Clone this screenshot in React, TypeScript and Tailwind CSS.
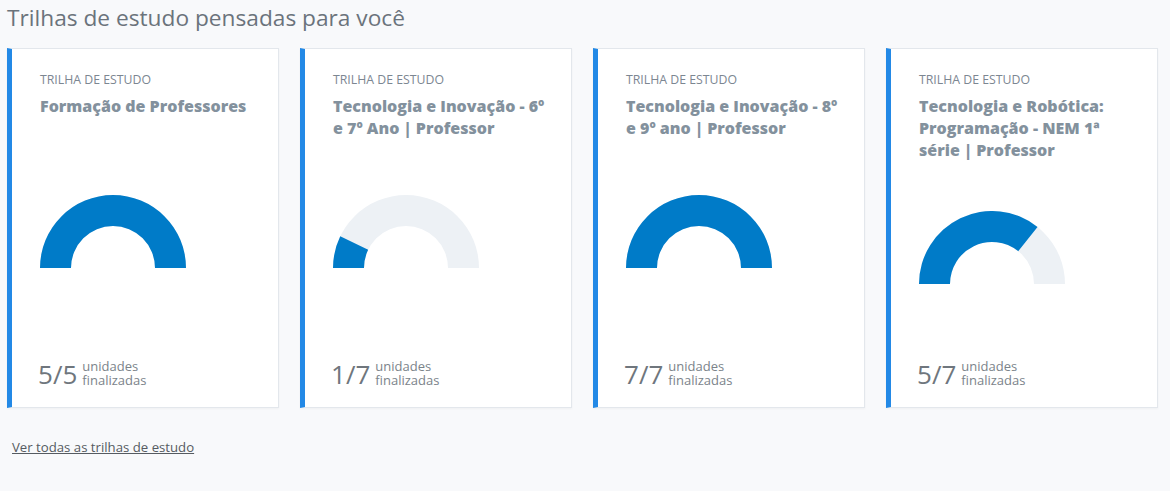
import React from 'react';

interface TrailCardProps {
  title: string;
  done: number;
  total: number;
}

const Gauge: React.FC<{ value: number }> = ({ value }) => {
  const R = 73;
  const r = 42;
  const cx = 73;
  const cy = 73;
  const a = Math.PI * value;
  const ox = cx - R * Math.cos(a);
  const oy = cy - R * Math.sin(a);
  const ix = cx - r * Math.cos(a);
  const iy = cy - r * Math.sin(a);
  const track = `M ${cx - R} ${cy} A ${R} ${R} 0 0 1 ${cx + R} ${cy} L ${cx + r} ${cy} A ${r} ${r} 0 0 0 ${cx - r} ${cy} Z`;
  const fill = `M ${cx - R} ${cy} A ${R} ${R} 0 0 1 ${ox} ${oy} L ${ix} ${iy} A ${r} ${r} 0 0 0 ${cx - r} ${cy} Z`;
  return (
    <svg width="146" height="73" viewBox="0 0 146 73" className="block">
      <path d={track} fill="#edf1f5" />
      {value > 0 && <path d={fill} fill="#007bc8" />}
    </svg>
  );
};

const TrailCard: React.FC<TrailCardProps> = ({ title, done, total }) => {
  return (
    <div className="h-[360px] flex flex-col bg-white border border-[#e3e7ec] border-l-[5px] border-l-[#2389e6] pl-[28px] pr-5 pt-[23px] pb-[18px] shadow-[0_1px_2px_rgba(0,0,0,0.04)]">
      <div className="text-[12.3px] leading-[16px] text-[#7c8691] uppercase mb-[7px]">Trilha de estudo</div>
      <div className="min-h-[50px] text-[16px] leading-[22px] font-extrabold text-[#83919d]">{title}</div>
      <div className="mt-[50px]">
        <Gauge value={done / total} />
      </div>
      <div className="mt-auto flex items-center gap-[5px] ml-[-2px]">
        <span className="text-[26px] leading-[30px] text-[#6f767d]">
          {done}/{total}
        </span>
        <span className="text-[13px] leading-[14px] text-[#7b838a] mt-[-2px]">
          unidades
          <br />
          finalizadas
        </span>
      </div>
    </div>
  );
};

export default function App() {
  const trails = [
    { title: 'Formação de Professores', done: 5, total: 5 },
    { title: 'Tecnologia e Inovação - 6º e 7º Ano | Professor', done: 1, total: 7 },
    { title: 'Tecnologia e Inovação - 8º e 9º ano | Professor', done: 7, total: 7 },
    { title: 'Tecnologia e Robótica: Programação - NEM 1ª série | Professor', done: 5, total: 7 },
  ];

  return (
    <div className="min-h-[491px] bg-[#f8f9fb] font-['Open_Sans',sans-serif] pl-[7px] pr-[12px]">
      <h2 className="text-[22.7px] leading-[30px] text-[#6b737c] pt-[3px] mb-[15px]">
        Trilhas de estudo pensadas para você
      </h2>
      <div className="grid grid-cols-4 gap-[21px]">
        {trails.map((trail, index) => (
          <TrailCard key={index} title={trail.title} done={trail.done} total={trail.total} />
        ))}
      </div>
      <div className="mt-[26px] pl-[5px]">
        <a href="#" className="text-[13.2px] leading-[18px] text-[#555b61] underline">
          Ver todas as trilhas de estudo
        </a>
      </div>
    </div>
  );
}
